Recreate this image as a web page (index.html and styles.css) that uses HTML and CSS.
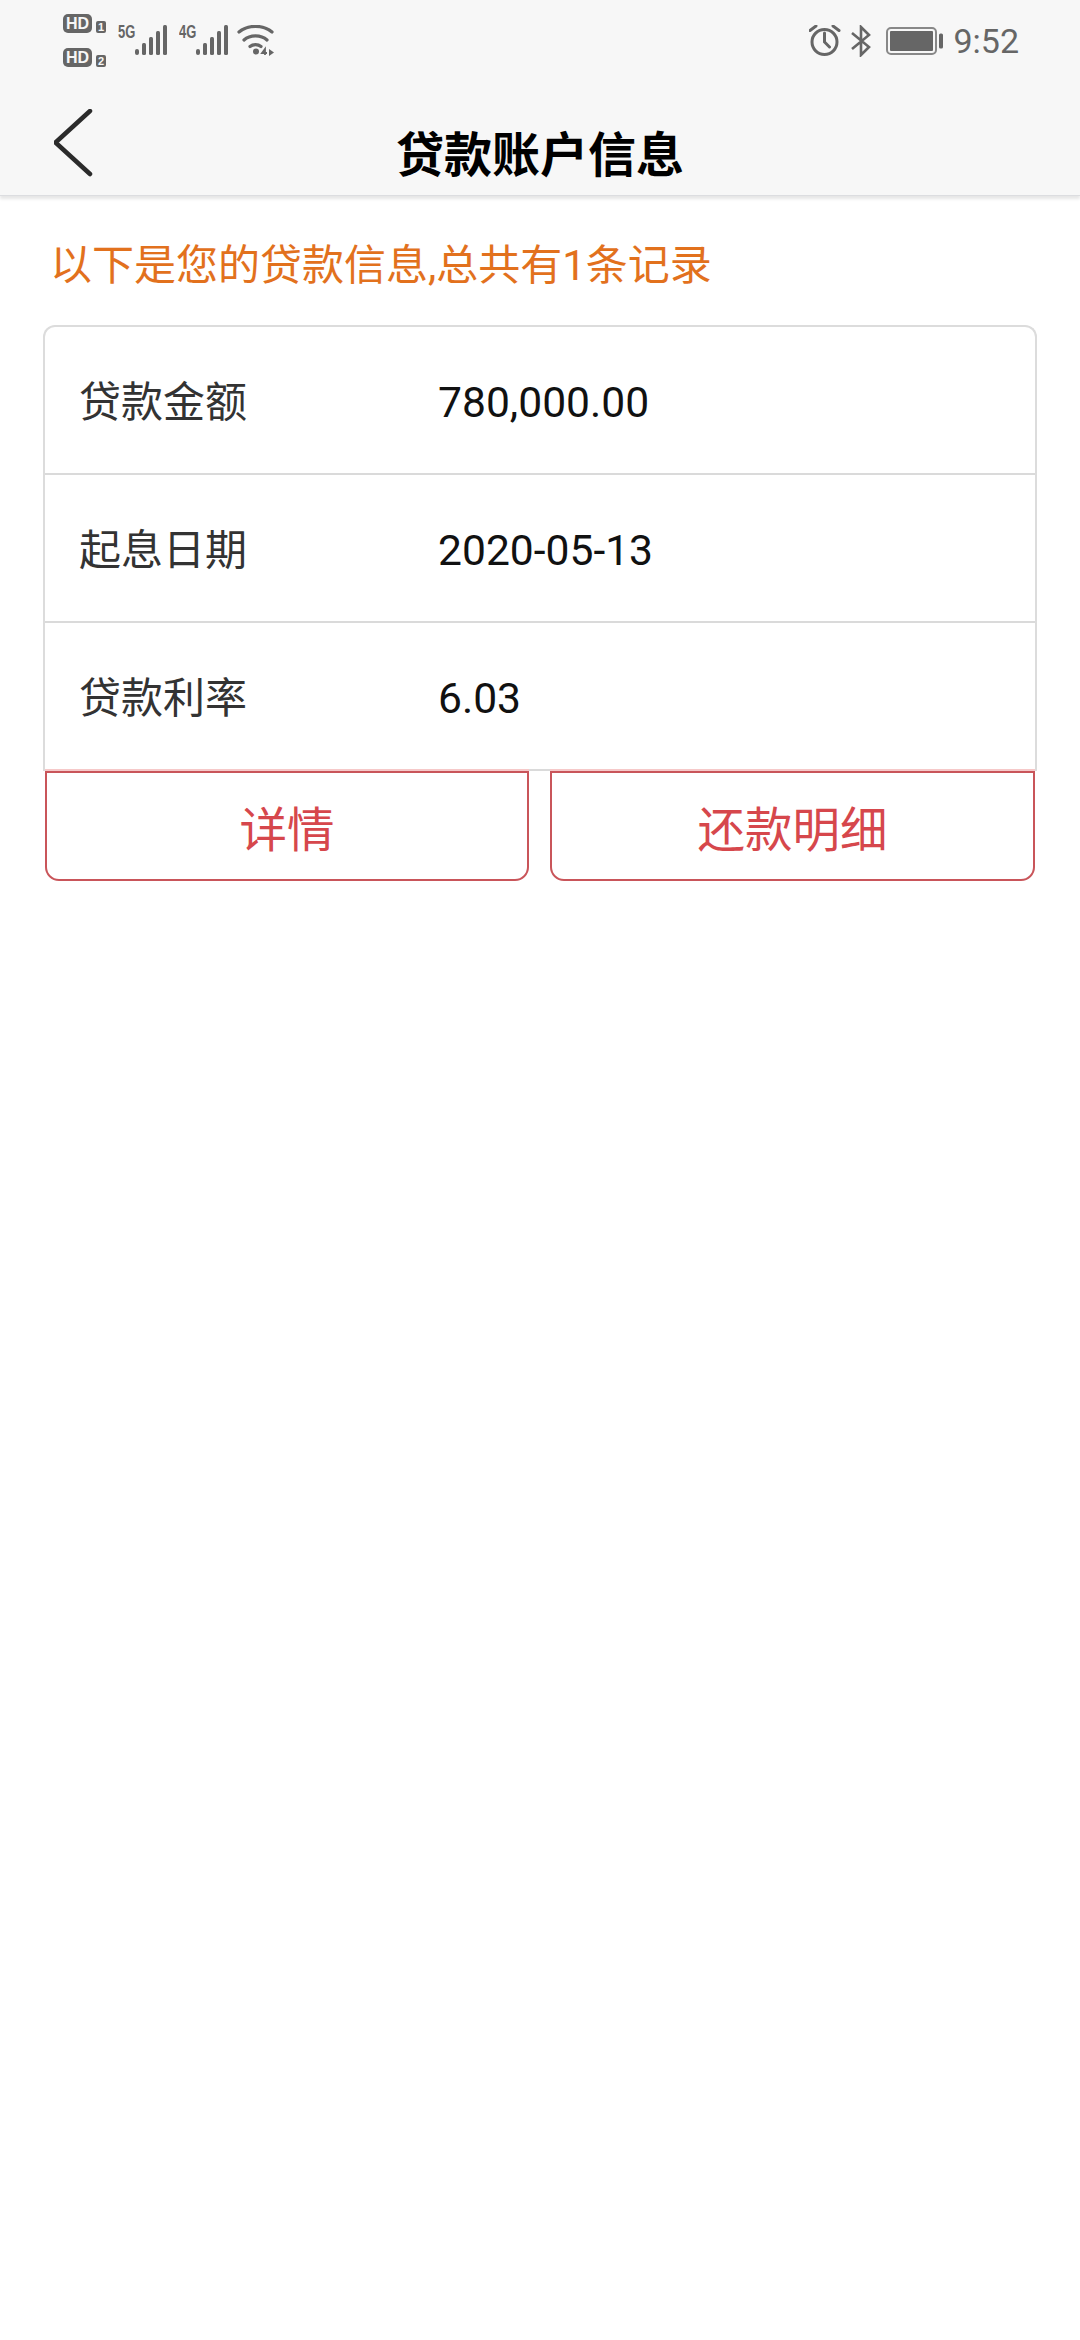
FILE: index.html
```html
<!DOCTYPE html>
<html lang="zh-CN">
<head>
<meta charset="utf-8">
<title>贷款账户信息</title>
<link rel="stylesheet" href="styles.css">
</head>
<body>
<header class="top">
  <div class="status">
    <div class="status-left">
      <div class="hd-stack">
        <div class="hd-row"><span class="hd">HD</span><span class="sim">1</span></div>
        <div class="hd-row"><span class="hd">HD</span><span class="sim">2</span></div>
      </div>
      <div class="net"><span class="net-label">5G</span>
        <svg class="bars" width="32" height="30" viewBox="0 0 32 30"><g fill="#666"><rect x="0" y="24" width="4" height="6" rx="2"/><rect x="7" y="18" width="4" height="12" rx="1.5"/><rect x="14" y="12" width="4" height="18" rx="1.5"/><rect x="21" y="6" width="4" height="24" rx="1.5"/><rect x="28" y="0" width="4" height="30" rx="1.5"/></g></svg>
      </div>
      <div class="net"><span class="net-label">4G</span>
        <svg class="bars" width="32" height="30" viewBox="0 0 32 30"><g fill="#666"><rect x="0" y="24" width="4" height="6" rx="2"/><rect x="7" y="18" width="4" height="12" rx="1.5"/><rect x="14" y="12" width="4" height="18" rx="1.5"/><rect x="21" y="6" width="4" height="24" rx="1.5"/><rect x="28" y="0" width="4" height="30" rx="1.5"/></g></svg>
      </div>
      <svg class="wifi" width="38" height="32" viewBox="0 0 38 32"><g fill="none" stroke="#666" stroke-width="3.2" stroke-linecap="round"><path d="M2 7C11 -0.500 26 -0.500 35 7"/><path d="M7 15C13 9.500 24 9.500 30 15"/><path d="M13 21.500C16 19 21 19 24 21.500"/></g><circle cx="19" cy="26.500" r="3" fill="#666"/><path d="M28 30V24L25 28H30" fill="none" stroke="#666" stroke-width="1.800"/><path d="M32 24V31L37 27.500Z" fill="#666"/></svg>
    </div>
    <div class="status-right">
      <svg class="alarm" width="32" height="32" viewBox="0 0 32 32"><g fill="none" stroke="#666" stroke-width="3"><circle cx="15.500" cy="17" r="12.500"/><path d="M15.500 8V17L20.500 22M1 5.500L7 1M30 5.500L24 1" stroke-linecap="round"/></g></svg>
      <svg class="bt" width="20" height="32" viewBox="0 0 20 32"><path d="M1 24L18 10L10 2V30L18 22L1 8" fill="none" stroke="#666" stroke-width="2.600"/></svg>
      <svg class="battery" width="58" height="28" viewBox="0 0 58 28"><rect x="1" y="1" width="49" height="26" rx="4" fill="none" stroke="#888" stroke-width="2"/><rect x="4" y="4" width="43" height="20" rx="1" fill="#666"/><rect x="53" y="6.500" width="4" height="15" rx="1.500" fill="#666"/></svg>
      <span class="time">9:52</span>
    </div>
  </div>
  <nav class="nav">
    <svg class="back" width="40" height="70" viewBox="0 0 40 70"><path d="M36 2L1.500 33.500L36 65" fill="none" stroke="#2b2b2b" stroke-width="4.500" stroke-linecap="round"/></svg>
    <h1 class="title">贷款账户信息</h1>
  </nav>
</header>
<main class="content">
  <p class="notice">以下是您的贷款信息,总共有1条记录</p>
  <section class="card">
    <div class="row"><span class="label">贷款金额</span><span class="value">780,000.00</span></div>
    <div class="row"><span class="label">起息日期</span><span class="value">2020-05-13</span></div>
    <div class="row"><span class="label">贷款利率</span><span class="value">6.03</span></div>
  </section>
  <div class="actions">
    <button class="btn">详情</button>
    <button class="btn">还款明细</button>
  </div>
</main>
</body>
</html>
```
FILE: styles.css
```css
* { box-sizing: border-box; }
html, body { margin: 0; padding: 0; }
body {
  width: 1080px;
  height: 2340px;
  background: #fff;
  font-family: Roboto, "Noto Sans CJK SC", sans-serif;
  overflow: hidden;
}
.top {
  height: 196px;
  background: #f7f7f7;
  border-bottom: 1px solid #dcdde0;
  box-shadow: 0 3px 3px rgba(0,0,0,.1);
}
.status {
  height: 78px;
  padding: 14px 61px 0 63px;
  display: flex;
  justify-content: space-between;
  align-items: flex-start;
}
.status-left { display: flex; align-items: flex-start; }
.status-right { display: flex; align-items: flex-start; padding-top: 11px; }
.hd-stack { display: flex; flex-direction: column; gap: 15px; width: 43px; margin-right: 12px; }
.hd-row { display: flex; align-items: flex-end; gap: 4px; height: 19px; }
.hd {
  width: 29px; height: 19px;
  background: #666; color: #f7f7f7;
  border-radius: 5px;
  font: 700 16px/19px "Liberation Sans", sans-serif;
  text-align: center;
}
.sim {
  width: 10px; height: 12px;
  background: #666; color: #f7f7f7;
  border-radius: 2px;
  font: 700 11px/12px "Liberation Sans", sans-serif;
  text-align: center;
}
.net { display: flex; align-items: flex-start; padding-top: 11px; width: 49px; margin-right: 12px; }
.net + .net { margin-right: 9px; }
.net-label {
  flex: none;
  width: 17px;
  font: 700 18px/14px "Liberation Sans", sans-serif;
  color: #666;
  transform: scaleX(.72);
  transform-origin: left center;
}
.bars { flex: none; }
.wifi { margin-top: 11px; }
.alarm { margin-right: 10px; }
.bt { margin-right: 15px; }
.battery { margin: 2px 9px 0 0; }
.time { font: 400 34px/32px Roboto, sans-serif; color: #666; }
.nav {
  height: 117px;
  position: relative;
  display: flex;
  align-items: center;
  justify-content: center;
}
.back { position: absolute; left: 54px; top: 31px; }
.title {
  margin: 38px 0 0;
  font-size: 48px;
  font-weight: 700;
  line-height: 64px;
  color: #000;
}
.content { padding: 0 43px; }
.notice {
  margin: 42px 0 31px 7px;
  font-size: 42px;
  font-weight: 400;
  line-height: 56px;
  color: #e2711d;
}
.card {
  width: 994px;
  border: 2px solid #dcdcdc;
  border-bottom: 0;
  border-radius: 12px 12px 0 0;
}
.row {
  height: 148px;
  display: flex;
  align-items: center;
  padding: 3px 0 0 34px;
  border-bottom: 2px solid #dadada;
  font-size: 42px;
}
.label { width: 359px; color: #333; padding-bottom: 7px; }
.value { color: #111; font-size: 42.600px; }
.actions {
  display: grid;
  grid-template-columns: 484px 485px;
  gap: 21px;
  margin-left: 2px;
  position: relative;
}
.btn {
  height: 110px;
  background: #fff;
  border: 2.500px solid #c9555a;
  border-radius: 0 0 14px 14px;
  box-shadow: 0 -2px 0 #f6c9c9;
  color: #d6474c;
  font-family: inherit;
  font-size: 47.500px;
  padding: 0;
}
```
